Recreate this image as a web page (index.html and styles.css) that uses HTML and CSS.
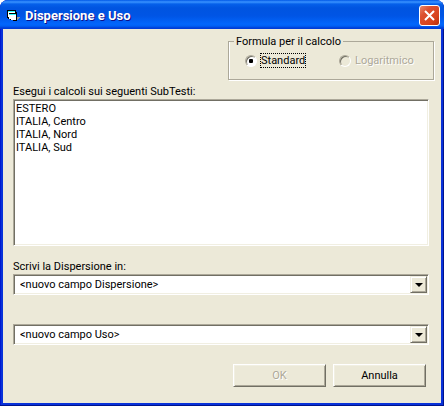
FILE: index.html
```html
<!DOCTYPE html>
<html lang="it">
<head>
<meta charset="utf-8">
<title>Dispersione e Uso</title>
<link rel="stylesheet" href="styles.css">
</head>
<body>
<form class="window">
  <header class="titlebar">
    <svg class="app-icon" viewBox="0 0 16 15" width="16" height="15" shape-rendering="crispEdges" aria-hidden="true">
      <path fill="#000" d="M1 2h9v2h1v9h-4v-1h-3v-1h-2v-1h-1z"/>
      <path fill="#fff" d="M2 4h7v1h-7zM2 5h1v4h-1zM3 7h7v1h-7zM3 8h7v3h-7zM5 11h5v1h-5z"/>
      <path fill="#3ff" d="M2 3h7v1h-7zM3 6h7v1h-7z"/>
      <path fill="#999" d="M11 9h3v1h-1v1h-1v1h-1z"/>
    </svg>
    <h1 class="title">Dispersione e Uso</h1>
    <button class="close" type="button" aria-label="Chiudi">
      <svg viewBox="0 0 11 11" width="11" height="11" aria-hidden="true"><path d="M1 1l9 9M10 1l-9 9" stroke="#fff" stroke-width="2"/></svg>
    </button>
  </header>
  <main class="content">
    <fieldset class="group">
      <legend>Formula per il calcolo</legend>
      <label class="option"><input type="radio" name="formula" checked><span class="focused">Standard</span></label>
      <label class="option disabled"><input type="radio" name="formula" disabled><span>Logaritmico</span></label>
    </fieldset>
    <label class="caption" for="subtesti">Esegui i calcoli sui seguenti SubTesti:</label>
    <select class="list sunken" id="subtesti" size="10" multiple>
      <option>ESTERO</option>
      <option>ITALIA, Centro</option>
      <option>ITALIA, Nord</option>
      <option>ITALIA, Sud</option>
    </select>
    <label class="caption" for="dispersione">Scrivi la Dispersione in:</label>
    <div class="combo sunken">
      <select id="dispersione"><option>&lt;nuovo campo Dispersione&gt;</option></select>
      <span class="arrow" aria-hidden="true"></span>
    </div>
    <div class="combo sunken">
      <select aria-label="Campo Uso"><option>&lt;nuovo campo Uso&gt;</option></select>
      <span class="arrow" aria-hidden="true"></span>
    </div>
    <div class="actions">
      <button class="button" type="submit" disabled>OK</button>
      <button class="button" type="button">Annulla</button>
    </div>
  </main>
</form>
</body>
</html>
```
FILE: styles.css
```css
* {
  box-sizing: border-box;
}

body {
  margin: 0;
  background: #fff;
  color: #000;
  font: 11px/13px Roboto, sans-serif;
}

.window {
  display: flex;
  flex-direction: column;
  min-height: 100vh;
  background: #0831d9;
  border-radius: 8px 8px 0 0;
  box-shadow: inset -1px -1px #00138c, inset 1px 0 #0019cf;
  overflow: hidden;
}

.titlebar {
  display: flex;
  align-items: center;
  gap: 3px;
  height: 29px;
  padding: 2px 4px 0 6px;
  background: linear-gradient(#0058e6 0, #3a93ff 2px, #0560ea 4px, #0054e0 8px, #0055e5 16px, #0266fc 24px, #0060f4 26px, #003dd7 28px);
}

.title {
  flex: 1;
  margin: 0;
  color: #fff;
  font: bold 13px/16px Roboto, sans-serif;
  text-shadow: 1px 1px #0f1089;
}

.close {
  display: grid;
  place-items: center;
  width: 21px;
  height: 21px;
  padding: 0;
  border: 1px solid #fff;
  border-radius: 3px;
  background: linear-gradient(135deg, #e8886c 0, #dc5030 30%, #d8431c 70%, #b8300a 100%);
}

.content {
  flex: 1;
  display: flex;
  flex-direction: column;
  margin: 0 3px 3px;
  padding: 6px 12px 16px 10px;
  background: #ece9d8;
}

.group {
  align-self: flex-end;
  display: flex;
  width: 206px;
  height: 45px;
  margin: 0 -5px 5px 0;
  padding: 5px 0 0 16px;
  border: 1px solid #aca899;
  box-shadow: 1px 1px #fff, inset 1px 0 #fff;
}

.group legend {
  margin-left: -11px;
  padding: 0 2px;
}

.option {
  display: flex;
  align-items: center;
  gap: 4px;
  width: 94px;
  height: 15px;
}

.option input {
  appearance: none;
  display: grid;
  place-items: center;
  width: 12px;
  height: 12px;
  margin: 0;
  border: 1px solid;
  border-color: #aca899 #fff #fff #aca899;
  border-radius: 50%;
  background: #fff;
  box-shadow: inset 1px 1px #716f64;
}

.option input:checked::before {
  content: "";
  width: 4px;
  height: 4px;
  border-radius: 1px;
  background: #000;
}

.option input:disabled {
  background: #ece9d8;
}

.focused {
  outline: 1px dotted #000;
}

.disabled,
.button:disabled {
  color: #aca899;
  text-shadow: 1px 1px #fff;
}

.caption {
  height: 14px;
}

.sunken {
  border: 1px solid;
  border-color: #aca899 #fff #fff #aca899;
  border-radius: 0;
  background: #fff;
  box-shadow: inset 1px 1px #716f64, inset -1px -1px #f1efe2;
}

.list {
  width: 100%;
  height: 147px;
  margin-bottom: 14px;
  padding: 2px 1px;
  font: inherit;
  color: inherit;
  outline: 0;
  overflow: hidden;
}

.list option {
  min-height: 13px;
  padding: 0 1px;
}

.combo {
  display: flex;
  height: 21px;
  padding: 1px;
}

.combo + .combo {
  margin-top: 29px;
}

.combo select {
  appearance: none;
  flex: 1;
  min-width: 0;
  padding: 0 5px;
  border: 0;
  background: transparent;
  color: inherit;
  font: inherit;
}

.arrow {
  display: grid;
  place-items: center;
  width: 17px;
  background: #ece9d8;
  border: 1px solid;
  border-color: #f1efe2 #716f64 #716f64 #f1efe2;
  box-shadow: inset 1px 1px #fff, inset -1px -1px #aca899;
}

.arrow::before {
  content: "";
  border: 4px solid transparent;
  border-top-color: #000;
  border-bottom: 0;
}

.actions {
  display: flex;
  justify-content: flex-end;
  gap: 7px;
  margin: auto 3px 0 0;
}

.button {
  width: 93px;
  height: 23px;
  padding: 0;
  border: 1px solid;
  border-color: #fff #716f64 #716f64 #fff;
  background: #ece9d8;
  box-shadow: inset 1px 1px #f1efe2, inset -1px -1px #aca899;
  color: #000;
  font: inherit;
}

.button:disabled {
  color: #aca899;
}
```
